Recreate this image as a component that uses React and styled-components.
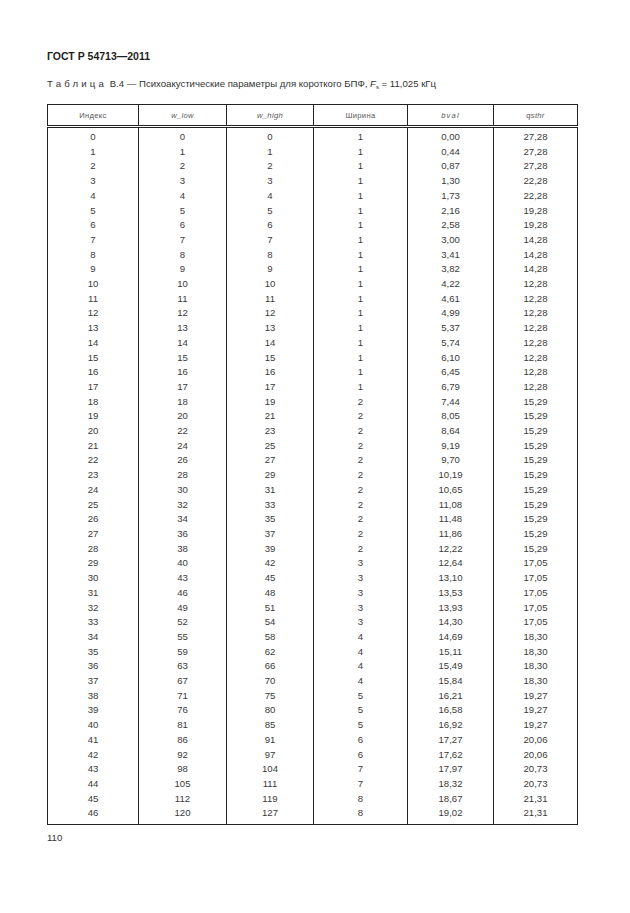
import React from "react";
import styled, { createGlobalStyle } from "styled-components";

const GlobalStyle = createGlobalStyle`
  html, body {
    margin: 0;
    padding: 0;
    background: #ffffff;
  }
  body {
    font-family: "Liberation Sans", Arial, sans-serif;
    color: #2b2b2b;
  }
`;

const rows = [
  [0, 0, 0, 1, "0,00", "27,28"],
  [1, 1, 1, 1, "0,44", "27,28"],
  [2, 2, 2, 1, "0,87", "27,28"],
  [3, 3, 3, 1, "1,30", "22,28"],
  [4, 4, 4, 1, "1,73", "22,28"],
  [5, 5, 5, 1, "2,16", "19,28"],
  [6, 6, 6, 1, "2,58", "19,28"],
  [7, 7, 7, 1, "3,00", "14,28"],
  [8, 8, 8, 1, "3,41", "14,28"],
  [9, 9, 9, 1, "3,82", "14,28"],
  [10, 10, 10, 1, "4,22", "12,28"],
  [11, 11, 11, 1, "4,61", "12,28"],
  [12, 12, 12, 1, "4,99", "12,28"],
  [13, 13, 13, 1, "5,37", "12,28"],
  [14, 14, 14, 1, "5,74", "12,28"],
  [15, 15, 15, 1, "6,10", "12,28"],
  [16, 16, 16, 1, "6,45", "12,28"],
  [17, 17, 17, 1, "6,79", "12,28"],
  [18, 18, 19, 2, "7,44", "15,29"],
  [19, 20, 21, 2, "8,05", "15,29"],
  [20, 22, 23, 2, "8,64", "15,29"],
  [21, 24, 25, 2, "9,19", "15,29"],
  [22, 26, 27, 2, "9,70", "15,29"],
  [23, 28, 29, 2, "10,19", "15,29"],
  [24, 30, 31, 2, "10,65", "15,29"],
  [25, 32, 33, 2, "11,08", "15,29"],
  [26, 34, 35, 2, "11,48", "15,29"],
  [27, 36, 37, 2, "11,86", "15,29"],
  [28, 38, 39, 2, "12,22", "15,29"],
  [29, 40, 42, 3, "12,64", "17,05"],
  [30, 43, 45, 3, "13,10", "17,05"],
  [31, 46, 48, 3, "13,53", "17,05"],
  [32, 49, 51, 3, "13,93", "17,05"],
  [33, 52, 54, 3, "14,30", "17,05"],
  [34, 55, 58, 4, "14,69", "18,30"],
  [35, 59, 62, 4, "15,11", "18,30"],
  [36, 63, 66, 4, "15,49", "18,30"],
  [37, 67, 70, 4, "15,84", "18,30"],
  [38, 71, 75, 5, "16,21", "19,27"],
  [39, 76, 80, 5, "16,58", "19,27"],
  [40, 81, 85, 5, "16,92", "19,27"],
  [41, 86, 91, 6, "17,27", "20,06"],
  [42, 92, 97, 6, "17,62", "20,06"],
  [43, 98, 104, 7, "17,97", "20,73"],
  [44, 105, 111, 7, "18,32", "20,73"],
  [45, 112, 119, 8, "18,67", "21,31"],
  [46, 120, 127, 8, "19,02", "21,31"],
];

const columns = [
  { title: "Индекс", width: 91, italic: false },
  { title: "w_low", width: 88, italic: true },
  { title: "w_high", width: 87, italic: true },
  { title: "Ширина", width: 94, italic: false },
  { title: "bval", width: 86, italic: true, spaced: true },
  { title: "qsthr", width: 84, italic: true },
];

const Page = styled.div`
  width: 630px;
  min-height: 913px;
  box-sizing: border-box;
  padding: 49px 0 0 47px;
`;

const DocCode = styled.div`
  font-size: 10.5px;
  font-weight: bold;
  color: #1e1e1e;
  line-height: 14px;
`;

const Caption = styled.div`
  margin-top: 14px;
  font-size: 9.6px;
  color: #333;
  line-height: 13px;
`;

const Spaced = styled.span`
  letter-spacing: 3.2px;
`;

const Sub = styled.sub`
  font-size: 6px;
  vertical-align: -2px;
`;

const Table = styled.table`
  margin-top: 10px;
  border-collapse: collapse;
  table-layout: fixed;
  width: 530px;
  border-bottom: 1.3px solid #222;
`;

const HeadCell = styled.th`
  height: 20px;
  padding: 0;
  border: 1px solid #222;
  border-bottom: 3.5px double #222;
  font-size: 7.6px;
  font-weight: normal;
  font-style: ${(p) => (p.$italic ? "italic" : "normal")};
  letter-spacing: ${(p) => (p.$spaced ? "1.2px" : "0.3px")};
  color: #555;
  text-align: center;
  vertical-align: middle;
`;

const Cell = styled.td`
  padding: 0;
  height: 14.7px;
  border-left: 1px solid #222;
  border-right: 1px solid #222;
  font-size: 9.6px;
  color: #3a3a3a;
  text-align: center;
  line-height: 14.7px;
  padding-top: ${(p) => (p.$first ? "2px" : "0")};
  padding-bottom: ${(p) => (p.$last ? "3px" : "0")};
`;

const PageNumber = styled.div`
  margin-top: 7px;
  font-size: 9.6px;
  line-height: 11px;
  color: #333;
`;

export default function App() {
  return (
    <>
      <GlobalStyle />
      <Page>
        <DocCode>ГОСТ Р 54713—2011</DocCode>
        <Caption>
          <Spaced>Таблица</Spaced> В.4 — Психоакустические параметры для короткого БПФ,{" "}
          <i>F</i>
          <Sub>s</Sub> = 11,025 кГц
        </Caption>
        <Table>
          <colgroup>
            {columns.map((c) => (
              <col key={c.title} style={{ width: c.width }} />
            ))}
          </colgroup>
          <thead>
            <tr>
              {columns.map((c) => (
                <HeadCell key={c.title} $italic={c.italic} $spaced={c.spaced}>
                  {c.title}
                </HeadCell>
              ))}
            </tr>
          </thead>
          <tbody>
            {rows.map((r, i) => (
              <tr key={i}>
                {r.map((v, j) => (
                  <Cell key={j} $first={i === 0} $last={i === rows.length - 1}>
                    {v}
                  </Cell>
                ))}
              </tr>
            ))}
          </tbody>
        </Table>
        <PageNumber>110</PageNumber>
      </Page>
    </>
  );
}
